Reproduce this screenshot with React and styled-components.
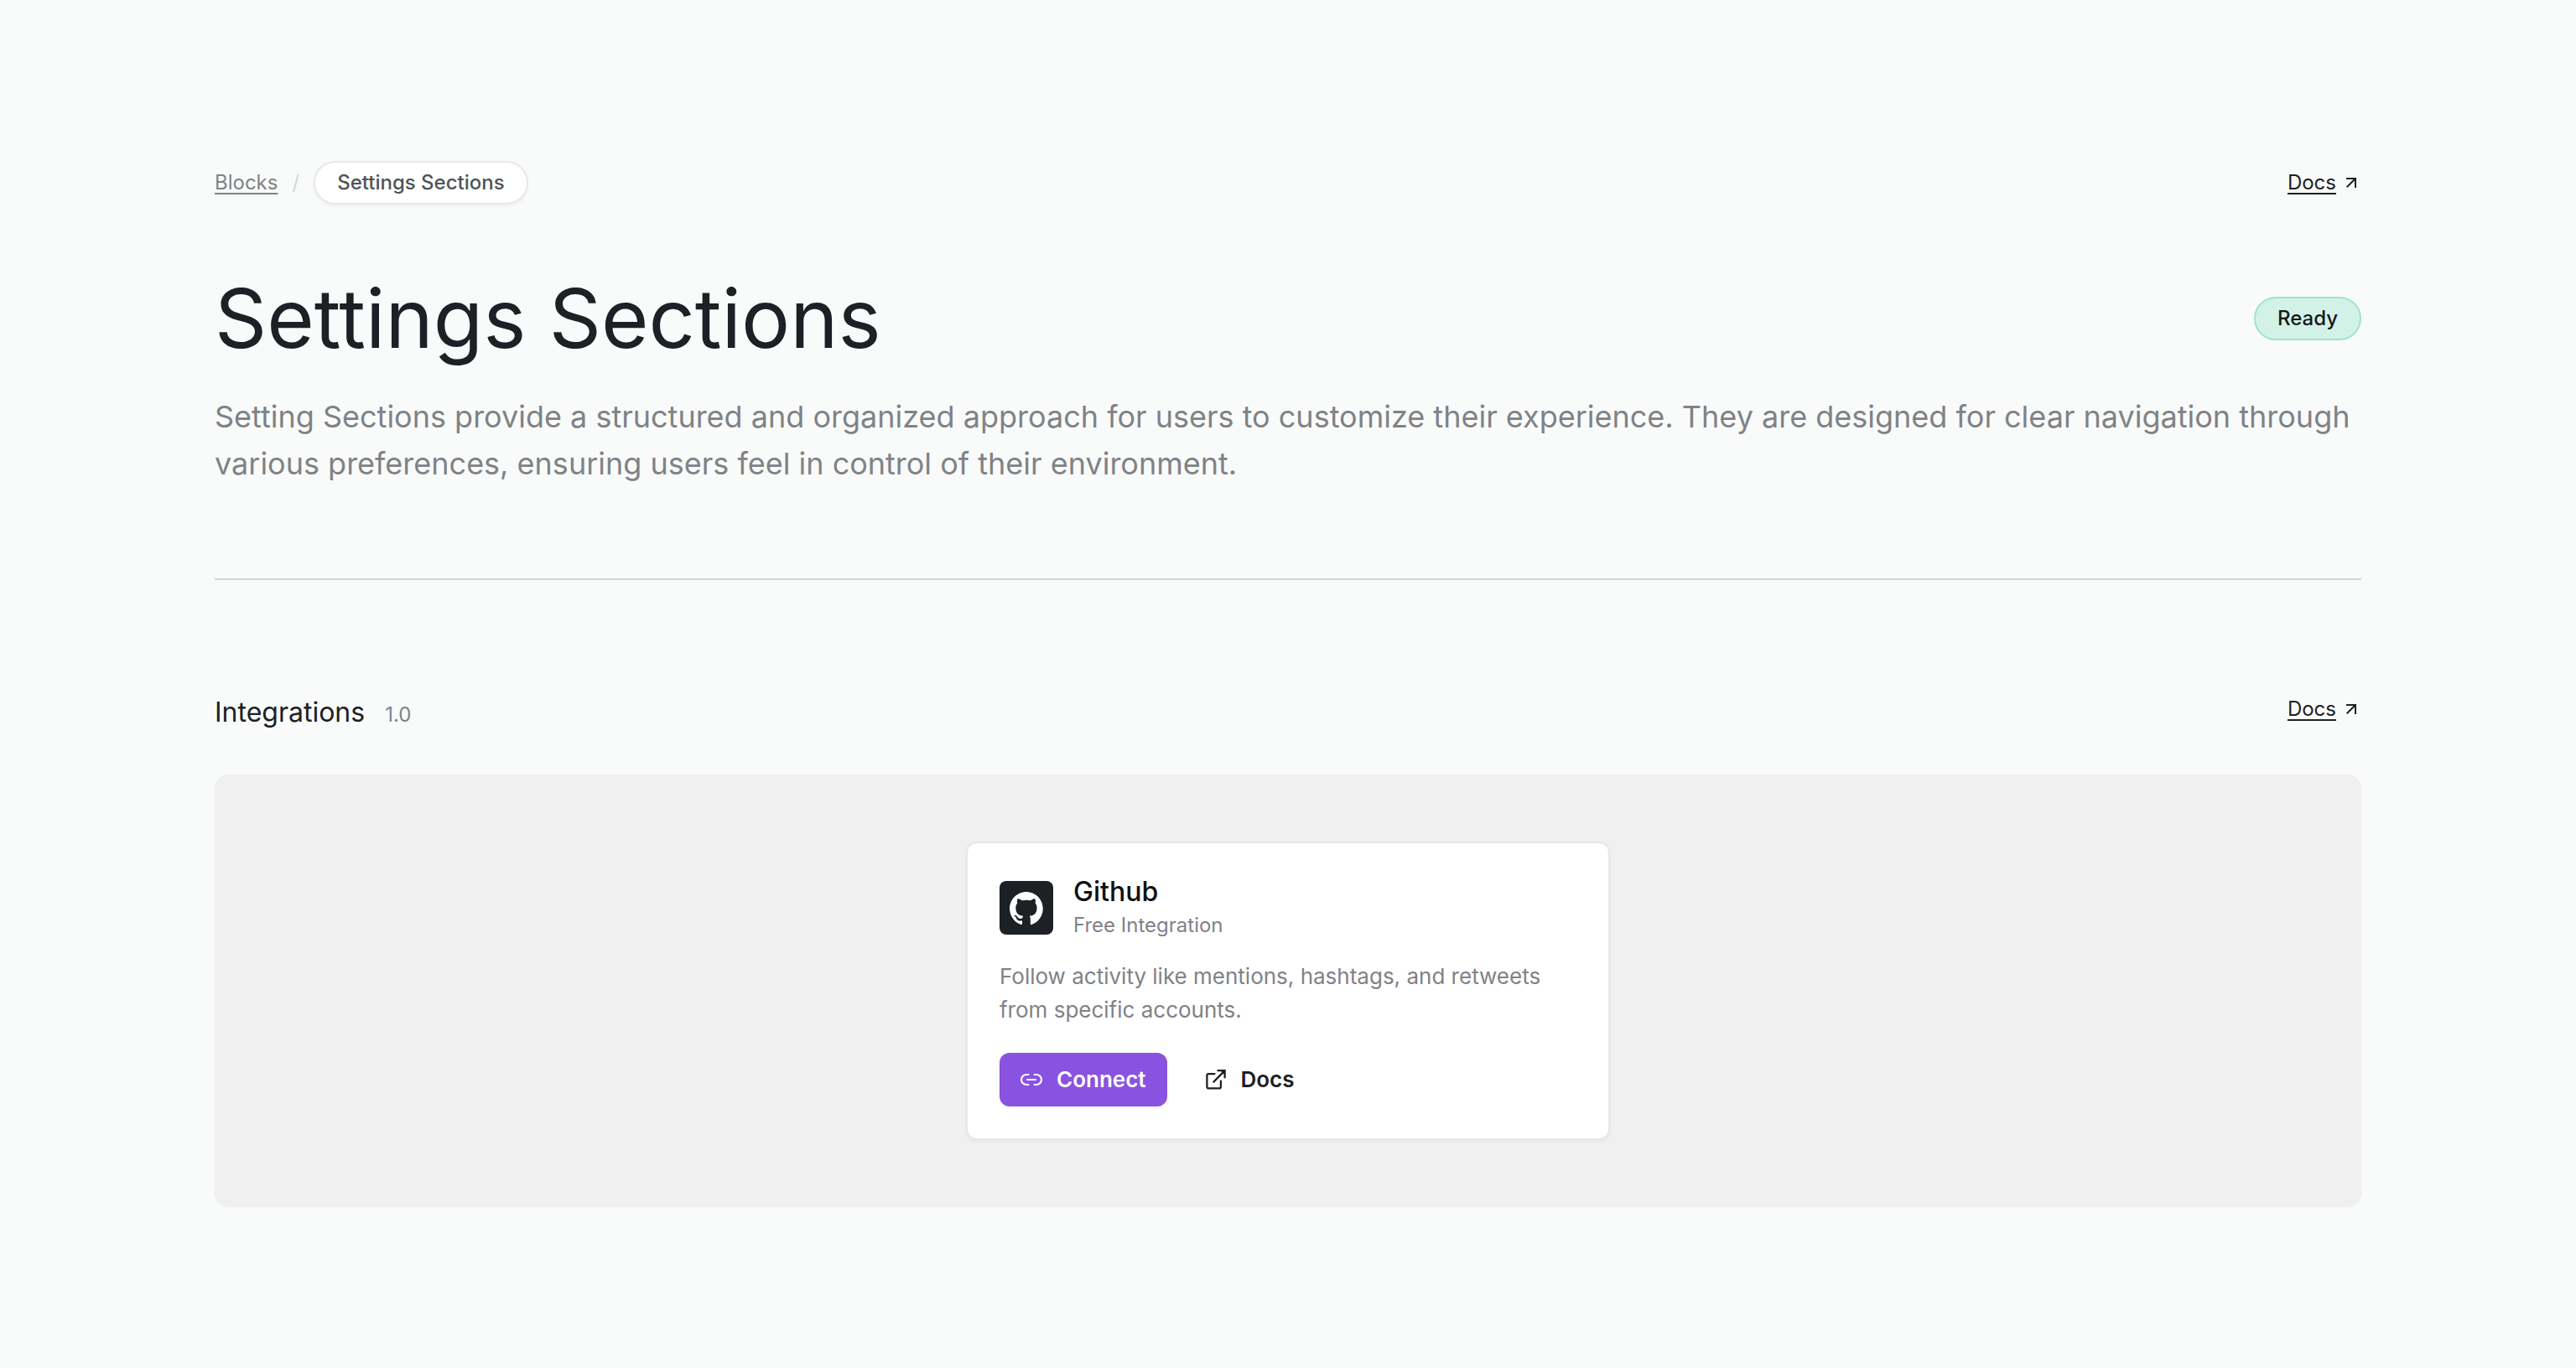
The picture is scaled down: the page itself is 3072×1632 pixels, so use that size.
import React from 'react';
import styled, { createGlobalStyle } from 'styled-components';

const GlobalStyle = createGlobalStyle`
  *, *::before, *::after { box-sizing: border-box; }
  body {
    margin: 0;
    background: #f9fbfa;
    color: #1d2025;
    font-family: Inter, "Liberation Sans", sans-serif;
    font-size: 24px;
    line-height: 36px;
    -webkit-font-smoothing: antialiased;
  }
  h1, h2, h3, p, ol { margin: 0; padding: 0; font-weight: 400; }
`;

const Page = styled.main`
  min-height: 100vh;
  padding: 192px 256px;
`;

const Spread = styled.div`
  display: flex;
  align-items: ${(p) => (p.$top ? 'flex-start' : 'center')};
  justify-content: space-between;
`;

const Crumbs = styled.ol`
  display: flex;
  align-items: center;
  gap: 17px;
  list-style: none;
`;

const Separator = styled.span`
  color: #d3d5d5;
`;

const CrumbLink = styled.a`
  color: #808287;
  text-underline-offset: 4px;
`;

const Pill = styled.span`
  display: inline-flex;
  align-items: center;
  height: 52px;
  padding: 0 26px;
  border: 2px solid ${(p) => (p.$ready ? '#9ee4cb' : '#e8e8e8')};
  border-radius: 26px;
  background: ${(p) => (p.$ready ? '#d3f2e7' : '#ffffff')};
  color: ${(p) => (p.$ready ? '#15181b' : '#4f5459')};
  font-weight: 500;
  box-shadow: ${(p) => (p.$ready ? 'none' : '0 2px 4px rgba(0, 0, 0, 0.05)')};
`;

const DocsAnchor = styled.a`
  display: inline-flex;
  align-items: center;
  gap: 6px;
  color: #1d2025;
  text-underline-offset: 4px;
  text-decoration: none;

  span { text-decoration: underline; }
`;

const Title = styled.h1`
  font-size: 97px;
  line-height: 120px;
`;

const TitleRow = styled(Spread)`
  margin-top: 76px;
`;

const Lead = styled.p`
  margin-top: 29px;
  color: #808287;
  font-size: 36px;
  line-height: 56px;
`;

const Divider = styled.hr`
  height: 2px;
  margin: 109px 0 136px;
  border: 0;
  background: #d5d7d6;
`;

const SectionHeading = styled.div`
  display: flex;
  align-items: baseline;
  gap: 24px;
`;

const SectionTitle = styled.h2`
  font-size: 32px;
  line-height: 44px;
`;

const Version = styled.span`
  color: #808287;
`;

const Preview = styled.section`
  display: flex;
  justify-content: center;
  margin-top: 52px;
  padding: 80px;
  border-radius: 16px;
  background: #f0f0f0;
`;

const Card = styled.article`
  width: 768px;
  padding: 38px;
  border: 2px solid #e7e7e7;
  border-radius: 12px;
  background: #ffffff;
  background-clip: padding-box;
  box-shadow: 0 2px 4px rgba(0, 0, 0, 0.04);
`;

const CardHeader = styled.header`
  display: flex;
  align-items: center;
  gap: 24px;
`;

const Logo = styled.div`
  display: grid;
  place-items: center;
  width: 64px;
  height: 64px;
  border-radius: 8px;
  background: #1d2025;
  color: #ffffff;
`;

const Names = styled.div`
  display: grid;
  gap: 2px;
`;

const CardTitle = styled.h3`
  color: #0f1113;
  font-size: 32px;
  font-weight: 500;
  line-height: 40px;
`;

const Plan = styled.p`
  color: #808287;
`;

const CardText = styled.p`
  margin-top: 23px;
  color: #808287;
  font-size: 26px;
  line-height: 40px;
`;

const Actions = styled.div`
  display: flex;
  gap: 20px;
  margin-top: 31px;
`;

const Button = styled.button`
  display: inline-flex;
  align-items: center;
  gap: 16px;
  height: 64px;
  padding: 0 25px 0 24px;
  border: 0;
  border-radius: 12px;
  background: ${(p) => (p.$primary ? '#8a52e0' : 'transparent')};
  color: ${(p) => (p.$primary ? '#ffffff' : '#1d2025')};
  font: 600 26px/36px Inter, "Liberation Sans", sans-serif;
  cursor: pointer;
`;

const ArrowIcon = () => (
  <svg width="24" height="24" viewBox="0 0 24 24" fill="none" stroke="currentColor" strokeWidth="2" aria-hidden="true">
    <path d="M6.7 17.3 17 7M6 7h11v11" />
  </svg>
);

const LinkIcon = () => (
  <svg width="28" height="28" viewBox="0 0 28 28" fill="none" stroke="currentColor" strokeWidth="2.2" strokeLinecap="round" aria-hidden="true">
    <path d="M10.4 8H8a6 6 0 0 0 0 12h2.4M17.6 8H20a6 6 0 0 1 0 12h-2.4M9 14h10" />
  </svg>
);

const ExternalIcon = () => (
  <svg width="28" height="28" viewBox="0 0 28 28" fill="none" stroke="currentColor" strokeWidth="2.3" strokeLinecap="round" aria-hidden="true">
    <path d="M12.4 7.2H5.2a1.8 1.8 0 0 0-1.8 1.8v13.6a1.8 1.8 0 0 0 1.8 1.8h12.9a1.8 1.8 0 0 0 1.8-1.8V15.6" />
    <path d="M16.4 3.2h8.2v8.2M24.4 3.4 11.4 16.6" />
    <path d="M20 4h4v4Z" fill="currentColor" stroke="none" />
  </svg>
);

const GithubIcon = () => (
  <svg width="40" height="39" viewBox="0 0 98 96" fill="currentColor" aria-hidden="true">
    <path fillRule="evenodd" clipRule="evenodd" d="M48.854 0C21.839 0 0 22 0 49.217c0 21.756 13.993 40.172 33.405 46.69 2.427.49 3.316-1.059 3.316-2.362 0-1.141-.08-5.052-.08-9.127-13.59 2.934-16.42-5.867-16.42-5.867-2.184-5.704-5.42-7.17-5.42-7.17-4.448-3.015.324-3.015.324-3.015 4.934.326 7.523 5.052 7.523 5.052 4.367 7.496 11.404 5.378 14.235 4.074.404-3.178 1.699-5.378 3.074-6.6-10.839-1.141-22.243-5.378-22.243-24.283 0-5.378 1.94-9.778 5.014-13.2-.485-1.222-2.184-6.275.486-13.038 0 0 4.125-1.304 13.426 5.052a46.97 46.97 0 0 1 12.214-1.63c4.125 0 8.33.571 12.213 1.63 9.302-6.356 13.427-5.052 13.427-5.052 2.67 6.763.97 11.816.485 13.038 3.155 3.422 5.015 7.822 5.015 13.2 0 18.905-11.404 23.06-22.324 24.283 1.78 1.548 3.316 4.481 3.316 9.126 0 6.6-.08 11.897-.08 13.526 0 1.304.89 2.853 3.316 2.364 19.412-6.52 33.405-24.935 33.405-46.691C97.707 22 75.788 0 48.854 0z" />
  </svg>
);

const DocsLink = () => (
  <DocsAnchor href="#docs">
    <span>Docs</span>
    <ArrowIcon />
  </DocsAnchor>
);

export default function App() {
  return (
    <>
      <GlobalStyle />
      <Page>
        <Spread>
          <nav aria-label="Breadcrumb">
            <Crumbs>
              <li><CrumbLink href="#blocks">Blocks</CrumbLink></li>
              <li aria-hidden="true"><Separator>/</Separator></li>
              <li><Pill aria-current="page">Settings Sections</Pill></li>
            </Crumbs>
          </nav>
          <DocsLink />
        </Spread>
        <TitleRow>
          <Title>Settings Sections</Title>
          <Pill $ready>Ready</Pill>
        </TitleRow>
        <Lead>
          Setting Sections provide a structured and organized approach for users to customize their experience. They are designed for clear navigation through various preferences, ensuring users feel in control of their environment.
        </Lead>
        <Divider />
        <Spread $top>
          <SectionHeading>
            <SectionTitle>Integrations</SectionTitle>
            <Version>1.0</Version>
          </SectionHeading>
          <DocsLink />
        </Spread>
        <Preview>
          <Card>
            <CardHeader>
              <Logo><GithubIcon /></Logo>
              <Names>
                <CardTitle>Github</CardTitle>
                <Plan>Free Integration</Plan>
              </Names>
            </CardHeader>
            <CardText>Follow activity like mentions, hashtags, and retweets from specific accounts.</CardText>
            <Actions>
              <Button type="button" $primary><LinkIcon />Connect</Button>
              <Button type="button"><ExternalIcon />Docs</Button>
            </Actions>
          </Card>
        </Preview>
      </Page>
    </>
  );
}
